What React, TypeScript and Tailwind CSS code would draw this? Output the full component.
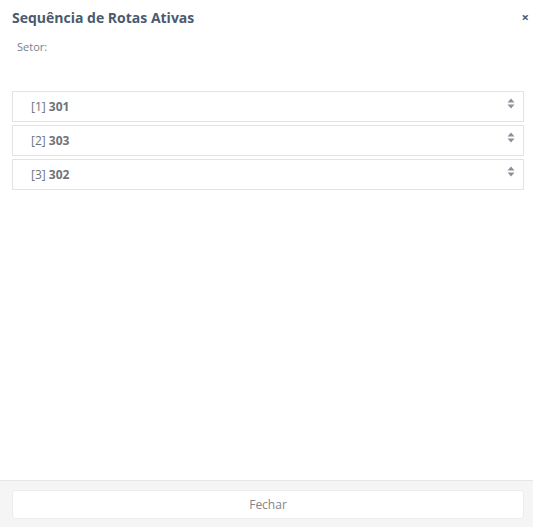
const routes = [
  { seq: 1, code: '301' },
  { seq: 2, code: '303' },
  { seq: 3, code: '302' },
]

function SortIcon() {
  return (
    <svg width="8" height="11" viewBox="0 0 8 11" className="text-[#8a9099]">
      <path d="M4 0.5 L7.5 4.5 L0.5 4.5 Z" fill="currentColor" />
      <path d="M4 10.5 L7.5 6.5 L0.5 6.5 Z" fill="currentColor" />
    </svg>
  )
}

export default function App() {
  return (
    <div className="flex h-[527px] w-[533px] flex-col bg-white font-['Open_Sans',sans-serif]">
      {/* Header */}
      <div className="flex items-start justify-between pl-3 pr-[4px] pt-[8px]">
        <h4 className="text-[14px] font-bold leading-[20px] text-[#4a5a71]">
          Sequência de Rotas Ativas
        </h4>
        <button className="mt-[3px] text-[13px] font-bold leading-[13px] text-[#4a5a71]">×</button>
      </div>

      {/* Body */}
      <div className="flex-1 pl-3 pr-[9px]">
        <div className="mt-[12px] pl-[5px] text-[11px] leading-[14px] text-[#7a7f86]">Setor:</div>
        <div className="mt-[37px] flex flex-col gap-[3px]">
          {routes.map((r) => (
            <div
              key={r.seq}
              className="flex h-[31px] items-center justify-between border border-[#e3e3e3] pl-[18px] pr-[8px]"
            >
              <span className="text-[12px] text-[#6e747b]">
                [{r.seq}] <span className="font-bold">{r.code}</span>
              </span>
              <span className="-mt-[6px]">
                <SortIcon />
              </span>
            </div>
          ))}
        </div>
      </div>

      {/* Footer */}
      <div className="border-t border-[#e5e5e5] bg-[#f5f5f5] pb-[8px] pl-3 pr-[9px] pt-[9px]">
        <button className="flex h-[29px] w-full items-center justify-center rounded-[3px] border border-[#ececec] bg-white text-[12px] text-[#80868c]">
          Fechar
        </button>
      </div>
    </div>
  )
}
